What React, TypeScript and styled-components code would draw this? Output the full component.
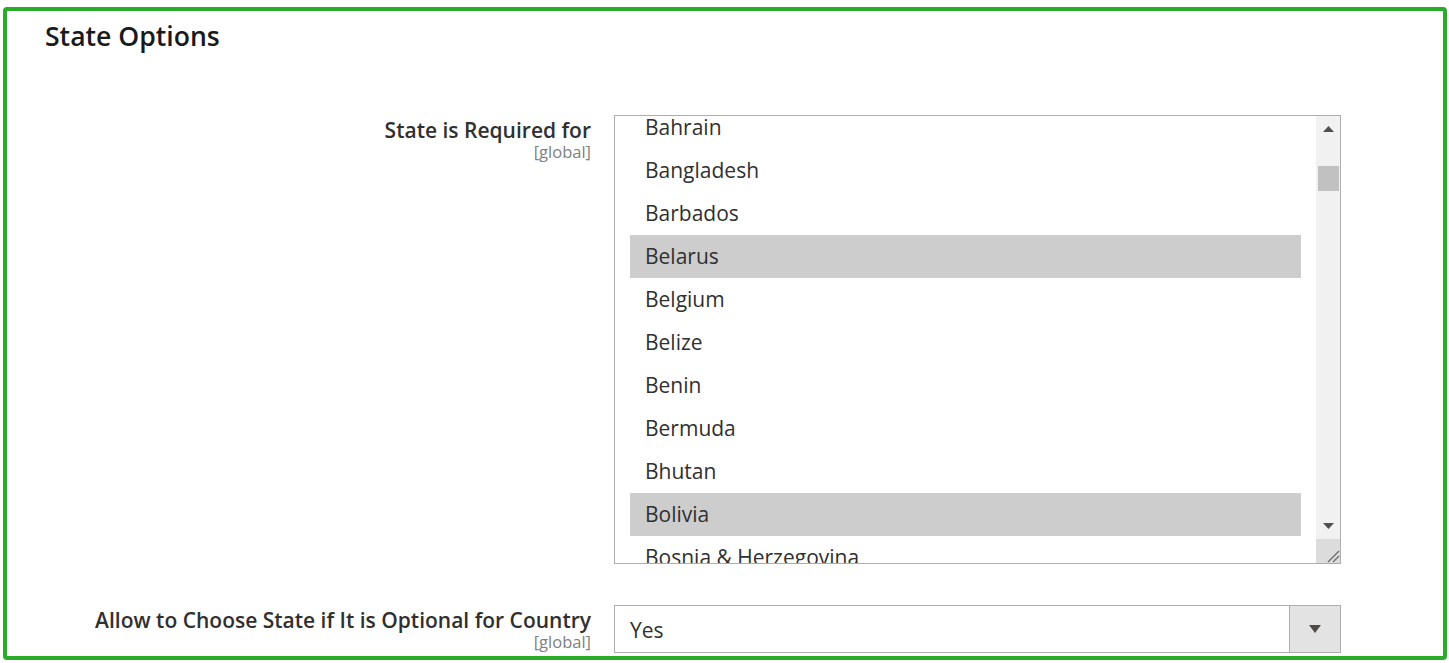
import React from "react";
import styled, { createGlobalStyle } from "styled-components";

const GlobalStyle = createGlobalStyle`
  html, body {
    margin: 0;
    padding: 0;
    background: #ffffff;
    font-family: "Open Sans", "Liberation Sans", sans-serif;
  }
`;

const COUNTRIES = [
  "Bahrain",
  "Bangladesh",
  "Barbados",
  "Belarus",
  "Belgium",
  "Belize",
  "Benin",
  "Bermuda",
  "Bhutan",
  "Bolivia",
  "Bosnia & Herzegovina",
];

const SELECTED = ["Belarus", "Bolivia"];

const Page = styled.div`
  padding: 7px 2px 0 3px;
`;

const Frame = styled.section`
  box-sizing: border-box;
  width: 1444px;
  height: 653px;
  border: 4px solid #2aab2a;
  border-radius: 4px;
  overflow: hidden;
`;

const Title = styled.h2`
  margin: 0;
  padding: 9px 0 0 38px;
  height: 104px;
  box-sizing: border-box;
  font-size: 26.6px;
  line-height: 32px;
  font-weight: 600;
  color: #1a1a1a;
`;

const Row = styled.div<{ $gap?: number }>`
  display: grid;
  grid-template-columns: 584px 727px;
  column-gap: 23px;
  margin-top: ${(p) => p.$gap ?? 0}px;
`;

const LabelCell = styled.div`
  text-align: right;
  padding-top: 3px;
`;

const LabelText = styled.div`
  font-size: 21px;
  line-height: 24px;
  font-weight: 600;
  color: #303030;
`;

const Scope = styled.div`
  font-size: 16.5px;
  line-height: 20px;
  color: #808080;
`;

const MultiBox = styled.div`
  box-sizing: border-box;
  height: 449px;
  border: 1px solid #adadad;
  display: flex;
  background: #fff;
`;

const Viewport = styled.div`
  flex: 1;
  overflow: hidden;
  padding: 0 15px 0 15px;
`;

const List = styled.ul`
  list-style: none;
  margin: -10px 0 0 0;
  padding: 0;
`;

const Option = styled.li<{ $selected?: boolean }>`
  height: 43px;
  line-height: 43px;
  padding-left: 15px;
  font-size: 21px;
  color: #303030;
  background: ${(p) => (p.$selected ? "#cdcdcd" : "transparent")};
  white-space: nowrap;
`;

const Scrollbar = styled.div`
  width: 24px;
  background: #f1f1f1;
  display: flex;
  flex-direction: column;
  align-items: center;
`;

const ArrowBtn = styled.div`
  height: 26px;
  width: 100%;
  display: flex;
  align-items: center;
  justify-content: center;
`;

const Track = styled.div`
  flex: 1;
  width: 100%;
  padding: 24px 1px 0 2px;
  box-sizing: border-box;
`;

const Thumb = styled.div`
  height: 25px;
  background: #c1c1c1;
`;

const Grip = styled.div`
  height: 24px;
  width: 100%;
  background: #dcdcdc;
  display: flex;
  align-items: flex-end;
  justify-content: flex-end;
`;

const SelectBox = styled.div`
  box-sizing: border-box;
  height: 48px;
  border: 1px solid #adadad;
  display: flex;
  align-items: stretch;
  background: #fff;
`;

const SelectValue = styled.div`
  flex: 1;
  padding: 1px 0 0 15px;
  font-size: 21px;
  line-height: 46px;
  color: #303030;
`;

const SelectButton = styled.div`
  width: 50px;
  background: #e3e3e3;
  border-left: 1px solid #adadad;
  display: flex;
  align-items: center;
  justify-content: center;
`;

const Triangle = ({ up, w, h, color }: { up?: boolean; w: number; h: number; color: string }) => (
  <svg width={w} height={h} viewBox={`0 0 ${w} ${h}`}>
    <polygon
      points={up ? `0,${h} ${w / 2},0 ${w},${h}` : `0,0 ${w},0 ${w / 2},${h}`}
      fill={color}
    />
  </svg>
);

export default function App() {
  return (
    <>
      <GlobalStyle />
      <Page>
        <Frame>
          <Title>State Options</Title>
          <Row>
            <LabelCell>
              <LabelText>State is Required for</LabelText>
              <Scope>[global]</Scope>
            </LabelCell>
            <MultiBox>
              <Viewport>
                <List>
                  {COUNTRIES.map((c) => (
                    <Option key={c} $selected={SELECTED.includes(c)}>
                      {c}
                    </Option>
                  ))}
                </List>
              </Viewport>
              <Scrollbar>
                <ArrowBtn>
                  <Triangle up w={11} h={6} color="#505050" />
                </ArrowBtn>
                <Track>
                  <Thumb />
                </Track>
                <ArrowBtn>
                  <Triangle w={11} h={6} color="#505050" />
                </ArrowBtn>
                <Grip>
                  <svg width="14" height="14" viewBox="0 0 14 14">
                    <line x1="2" y1="13" x2="13" y2="2" stroke="#6a6a6a" strokeWidth="1.2" />
                    <line x1="7" y1="13" x2="13" y2="7" stroke="#6a6a6a" strokeWidth="1.2" />
                  </svg>
                </Grip>
              </Scrollbar>
            </MultiBox>
          </Row>
          <Row $gap={41}>
            <LabelCell>
              <LabelText>Allow to Choose State if It is Optional for Country</LabelText>
              <Scope>[global]</Scope>
            </LabelCell>
            <SelectBox>
              <SelectValue>Yes</SelectValue>
              <SelectButton>
                <Triangle w={12} h={8} color="#514943" />
              </SelectButton>
            </SelectBox>
          </Row>
        </Frame>
      </Page>
    </>
  );
}
